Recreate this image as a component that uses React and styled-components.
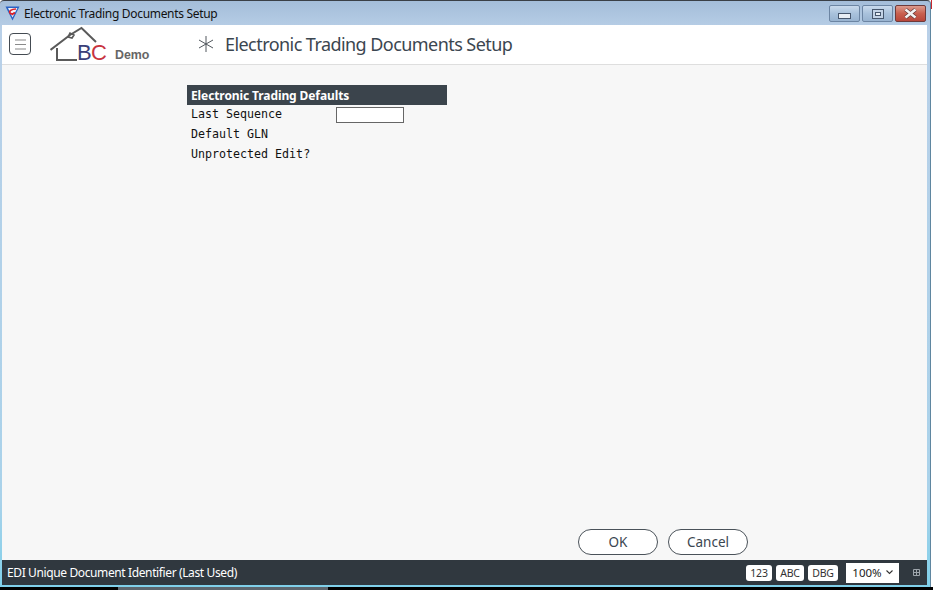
import React from "react"
import styled, { createGlobalStyle } from "styled-components"

const GlobalStyle = createGlobalStyle`
  html, body {
    margin: 0;
    padding: 0;
    background: #fff;
    overflow: hidden;
  }
`

const TitleLogo = () => (
  <svg width="15" height="15" viewBox="0 0 15 15">
    <path d="M0.5 0.5 L14.5 0.5 L7.5 14.5 Z" fill="#2a63c4" />
    <path d="M3 2 L12.4 2 L7.5 11.5 Z" fill="#f2f4f8" />
    <path d="M11 3 C6 3 3.8 5.5 5 7 C6 8.4 8.5 7.8 10 6.6" fill="none" stroke="#d8222c" strokeWidth="1.7" />
    <path d="M7 9 L9.5 6.5" stroke="#d8222c" strokeWidth="1.2" />
  </svg>
)

const MenuIcon = () => (
  <svg width="11" height="11" viewBox="0 0 11 11">
    <path d="M0 1 H11 M0 5.5 H11 M0 10 H11" stroke="#8a8a8a" strokeWidth="1.2" />
  </svg>
)

const BrandLogo = () => (
  <svg width="47" height="38" viewBox="0 0 47 38">
    <path d="M0.5 24 L20 9 L31.5 2 L46 16" fill="none" stroke="#5a5a5a" strokeWidth="2" />
    <path d="M18 11 L20 7 L24 9 L22 12 Z" fill="none" stroke="#5a5a5a" strokeWidth="1.6" />
    <path d="M7 22 V34 H27" fill="none" stroke="#5a5a5a" strokeWidth="2" />
  </svg>
)

const Asterisk = () => (
  <svg width="16" height="16" viewBox="0 0 16 16">
    <path d="M8 0 V16 M1 4 L15 12 M15 4 L1 12" stroke="#50565c" strokeWidth="1" />
  </svg>
)

const MinimizeGlyph = () => (
  <svg width="13" height="6" viewBox="0 0 13 6" style={{ marginTop: 5 }}>
    <rect x="0.5" y="0.5" width="12" height="5" fill="#e8eef5" stroke="#46566c" />
  </svg>
)

const MaximizeGlyph = () => (
  <svg width="12" height="10" viewBox="0 0 12 10">
    <rect x="0.5" y="0.5" width="11" height="9" fill="#c3d3e6" stroke="#46566c" />
    <rect x="3.5" y="3.5" width="5" height="3" fill="#e8eef5" stroke="#46566c" />
  </svg>
)

const CloseGlyph = () => (
  <svg width="15" height="11" viewBox="0 0 15 11">
    <path d="M2.5 1.5 L12.5 9.5 M12.5 1.5 L2.5 9.5" stroke="#5a3232" strokeWidth="3.8" />
    <path d="M2.5 1.5 L12.5 9.5 M12.5 1.5 L2.5 9.5" stroke="#f4f4f4" strokeWidth="2.6" />
  </svg>
)

const GridIcon = () => (
  <svg width="7" height="7" viewBox="0 0 7 7">
    <path d="M0.5 0.5 H6.5 V6.5 H0.5 Z M0.5 3.5 H6.5 M3.5 0.5 V6.5" fill="none" stroke="#9ea5ab" strokeWidth="1" />
  </svg>
)

const ChevronIcon = () => (
  <svg width="7" height="5" viewBox="0 0 7 5">
    <path d="M0.5 0.5 L3.5 3.5 L6.5 0.5" fill="none" stroke="#333" strokeWidth="1.1" />
  </svg>
)

const App = () => {
  return (
    <>
      <GlobalStyle />
      <Page>
        <Window>
          <TitleBar>
            <TitleLeft>
              <TitleLogo />
              <WindowTitle>Electronic Trading Documents Setup</WindowTitle>
            </TitleLeft>
            <WindowButtons>
              <WindowButton><MinimizeGlyph /></WindowButton>
              <WindowButton><MaximizeGlyph /></WindowButton>
              <WindowButton $close><CloseGlyph /></WindowButton>
            </WindowButtons>
          </TitleBar>
          <Content>
            <Header>
              <MenuButton><MenuIcon /></MenuButton>
              <Brand>
                <BrandLogo />
                <BrandLetters><b>B</b><i>C</i></BrandLetters>
                <BrandDemo>Demo</BrandDemo>
              </Brand>
              <HeaderTitle>
                <Asterisk />
                <PageTitle>Electronic Trading Documents Setup</PageTitle>
              </HeaderTitle>
            </Header>
            <Main>
              <Panel>
                <PanelHeading>Electronic Trading Defaults</PanelHeading>
                <FieldRow>
                  <FieldLabel>Last Sequence</FieldLabel>
                  <FieldInput />
                </FieldRow>
                <FieldRow>
                  <FieldLabel>Default GLN</FieldLabel>
                </FieldRow>
                <FieldRow>
                  <FieldLabel>Unprotected Edit?</FieldLabel>
                </FieldRow>
              </Panel>
              <Actions>
                <ActionButton>OK</ActionButton>
                <ActionButton>Cancel</ActionButton>
              </Actions>
            </Main>
            <StatusBar>
              <StatusText>EDI Unique Document Identifier (Last Used)</StatusText>
              <StatusTools>
                <ModeTag $w={26}>123</ModeTag>
                <ModeTag $w={28}>ABC</ModeTag>
                <ModeTag $w={30}>DBG</ModeTag>
                <ZoomSelect>100% <ChevronIcon /></ZoomSelect>
                <GridSlot><GridIcon /></GridSlot>
              </StatusTools>
            </StatusBar>
          </Content>
        </Window>
        <BehindStrip />
        <BehindEdge />
      </Page>
    </>
  )
}

export default App

const Page = styled.div`
  position: relative;
  width: 933px;
  height: 590px;
  display: flex;
  flex-direction: column;
  background: #fff;
  overflow: hidden;
`

const Window = styled.div`
  width: 931px;
  height: 587px;
  box-sizing: border-box;
  display: flex;
  flex-direction: column;
  padding: 0 3px 2px 2px;
  background: linear-gradient(#a4bdd9, #b9d0e8 30px, #a9d2ea 500px, #7fd0ea);
  border-top: 1px solid #3a3f46;
  border-right: 1px solid #5f86a0;
  border-radius: 4px 4px 0 0;
`

const TitleBar = styled.div`
  height: 24px;
  flex: none;
  display: flex;
  align-items: center;
  justify-content: space-between;
  padding-left: 3px;
`

const TitleLeft = styled.div`
  display: flex;
  align-items: center;
  gap: 4px;
`

const WindowTitle = styled.span`
  font: 12px "Noto Sans", sans-serif;
  letter-spacing: -0.32px;
  color: #111;
`

const WindowButtons = styled.div`
  display: flex;
  align-self: flex-start;
  gap: 2px;
  padding-right: 1px;
  margin-top: 4px;
`

const WindowButton = styled.div`
  width: 31px;
  height: 17px;
  box-sizing: border-box;
  display: flex;
  align-items: center;
  justify-content: center;
  border: 1px solid ${p => (p.$close ? "#6e3a3a" : "#6c85a3")};
  border-radius: 2px;
  background: ${p =>
    p.$close
      ? "linear-gradient(#dc9a8c, #c9604f 50%, #b8463a)"
      : "linear-gradient(#c9daec, #a9c2dc 50%, #98b3d0)"};
`

const Content = styled.div`
  flex: 1;
  min-height: 0;
  display: flex;
  flex-direction: column;
  background: #f7f7f7;
`

const Header = styled.header`
  height: 39px;
  flex: none;
  display: flex;
  align-items: center;
  padding-left: 7px;
  background: #fff;
  border-bottom: 1px solid #dedede;
`

const MenuButton = styled.div`
  width: 22px;
  height: 22px;
  box-sizing: border-box;
  display: flex;
  align-items: center;
  justify-content: center;
  border: 1px solid #444b52;
  border-radius: 4px;
  margin-bottom: 1px;
`

const Brand = styled.div`
  width: 167px;
  height: 39px;
  box-sizing: border-box;
  display: flex;
  align-items: flex-end;
  padding-left: 19px;
`

const BrandLetters = styled.div`
  margin-left: -20px;
  margin-bottom: -1px;
  font: 22px/24px "Liberation Sans", sans-serif;
  letter-spacing: -0.8px;
  b {
    font-weight: 400;
    color: #3b3f78;
  }
  i {
    font-style: normal;
    color: #c8343f;
  }
`

const BrandDemo = styled.span`
  font: bold 12.4px "Liberation Sans", sans-serif;
  color: #666;
  margin-left: 9px;
  margin-bottom: 2px;
`

const HeaderTitle = styled.div`
  display: flex;
  align-items: center;
  gap: 11px;
  margin-bottom: 2px;
`

const PageTitle = styled.h1`
  margin: 0;
  font: 400 18px "Noto Sans", sans-serif;
  letter-spacing: -0.56px;
  color: #3b4650;
`

const Main = styled.main`
  flex: 1;
  min-height: 0;
  display: flex;
  flex-direction: column;
  justify-content: space-between;
  padding: 20px 0 0 185px;
`

const Panel = styled.section`
  width: 260px;
`

const PanelHeading = styled.h2`
  margin: 0;
  height: 20px;
  padding-left: 4px;
  background: #3b444c;
  color: #fff;
  font: 700 12px/21px "Noto Sans", sans-serif;
  letter-spacing: -0.1px;
`

const FieldRow = styled.div`
  height: 20px;
  display: flex;
  align-items: center;
  padding-left: 4px;
`

const FieldLabel = styled.span`
  width: 145px;
  margin-bottom: 3px;
  font: 11.65px "DejaVu Sans Mono", monospace;
  color: #111;
`

const FieldInput = styled.div`
  width: 68px;
  height: 16px;
  box-sizing: border-box;
  background: #fff;
  border: 1px solid #666;
`

const Actions = styled.div`
  display: flex;
  gap: 10px;
  padding: 0 0 5px 391px;
`

const ActionButton = styled.div`
  width: 80px;
  height: 26px;
  box-sizing: border-box;
  display: flex;
  align-items: center;
  justify-content: center;
  padding-bottom: 1px;
  border: 1px solid #4a5259;
  border-radius: 13px;
  background: #fff;
  color: #3b4650;
  font: 13.5px "Noto Sans", sans-serif;
`

const StatusBar = styled.footer`
  height: 25px;
  flex: none;
  display: flex;
  align-items: center;
  justify-content: space-between;
  padding: 0 7px 0 5px;
  background: #30383f;
`

const StatusText = styled.span`
  color: #fff;
  font: 12px "Noto Sans", sans-serif;
  letter-spacing: -0.38px;
`

const StatusTools = styled.div`
  display: flex;
  align-items: center;
  gap: 4px;
`

const ModeTag = styled.div`
  width: ${p => p.$w}px;
  height: 16px;
  display: flex;
  align-items: center;
  justify-content: center;
  background: #fff;
  border-radius: 3px;
  color: #333;
  font: 10.5px "Noto Sans", sans-serif;
  letter-spacing: -0.2px;
`

const ZoomSelect = styled.div`
  width: 53px;
  height: 20px;
  margin-left: 4px;
  display: flex;
  align-items: center;
  justify-content: center;
  gap: 4px;
  background: #fff;
  color: #222;
  font: 11.5px "Noto Sans", sans-serif;
`

const GridSlot = styled.div`
  display: flex;
  margin-left: 10px;
`

const BehindStrip = styled.div`
  height: 3px;
  width: 933px;
  background: linear-gradient(90deg, #000 118px, #5d666e 118px, #5d666e 328px, #000 328px);
`

const BehindEdge = styled.div`
  position: absolute;
  top: 0;
  right: 1px;
  width: 1px;
  height: 9px;
  background: #c8282e;
`
